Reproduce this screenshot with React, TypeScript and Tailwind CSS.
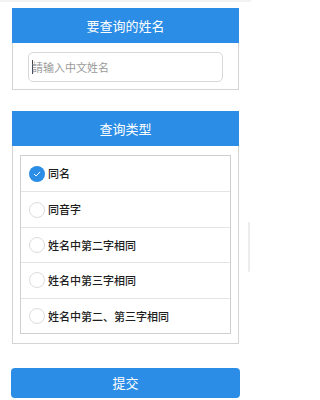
import { useState } from 'react';

const options = ['同名', '同音字', '姓名中第二字相同', '姓名中第三字相同', '姓名中第二、第三字相同'];

function Radio({ checked }: { checked: boolean }) {
  if (checked) {
    return (
      <span className="flex h-[16px] w-[16px] shrink-0 items-center justify-center rounded-full bg-[#2b8de6]">
        <svg viewBox="0 0 16 16" className="h-[10px] w-[10px]" fill="none" stroke="#fff" strokeWidth="1.6" strokeLinecap="round" strokeLinejoin="round">
          <path d="M3.5 8.3l3 2.8 6-6" />
        </svg>
      </span>
    );
  }
  return <span className="h-[16px] w-[16px] shrink-0 rounded-full border border-[#dcdcdc] bg-white" />;
}

export default function App() {
  const [selected, setSelected] = useState(0);

  return (
    <div className="relative min-h-[400px] w-[251px] overflow-hidden bg-white font-['Noto_Sans_CJK_SC','Noto_Sans',sans-serif]">
      <div className="h-[2px] bg-[#f2f2f2]" />
      <div className="px-[12px] pt-[6px]">
        <div className="border border-t-0 border-[#d4d4d4]">
          <div className="-mx-px flex h-[35px] items-center justify-center bg-[#2b8de6] text-[13px] text-white">要查询的姓名</div>
          <div className="px-[15px] pb-[7px] pt-[9px]">
            <div className="flex h-[30px] items-center rounded-[5px] border border-[#d8d8d8] px-[3px]">
              <span className="mr-[-1px] h-[14px] w-px bg-[#444]" />
              <span className="text-[11px] text-[#9a9a9a]">請输入中文姓名</span>
            </div>
          </div>
        </div>

        <div className="mt-[21px] border border-t-0 border-[#d4d4d4]">
          <div className="-mx-px flex h-[35px] items-center justify-center bg-[#2b8de6] text-[13px] text-white">查询类型</div>
          <div className="px-[7px] pb-[9px] pt-[9px]">
            <div className="border border-[#cfcfcf]">
              {options.map((label, i) => (
                <div
                  key={label}
                  onClick={() => setSelected(i)}
                  className={`flex h-[35.4px] items-center gap-[3px] pl-[8px] ${i > 0 ? 'border-t border-[#e4e4e4]' : ''}`}
                >
                  <Radio checked={selected === i} />
                  <span className="text-[11px] font-medium text-[#1e1e1e]">{label}</span>
                </div>
              ))}
            </div>
          </div>
        </div>
      </div>

      <div className="px-[11px] pt-[24px]">
        <button className="flex h-[30px] w-full items-center justify-center rounded-[4px] bg-[#2b8de6] text-[13px] text-white">提交</button>
      </div>

      <div className="absolute right-[1px] top-[222px] h-[50px] w-[2px] rounded-full bg-[#ececec]" />
    </div>
  );
}
